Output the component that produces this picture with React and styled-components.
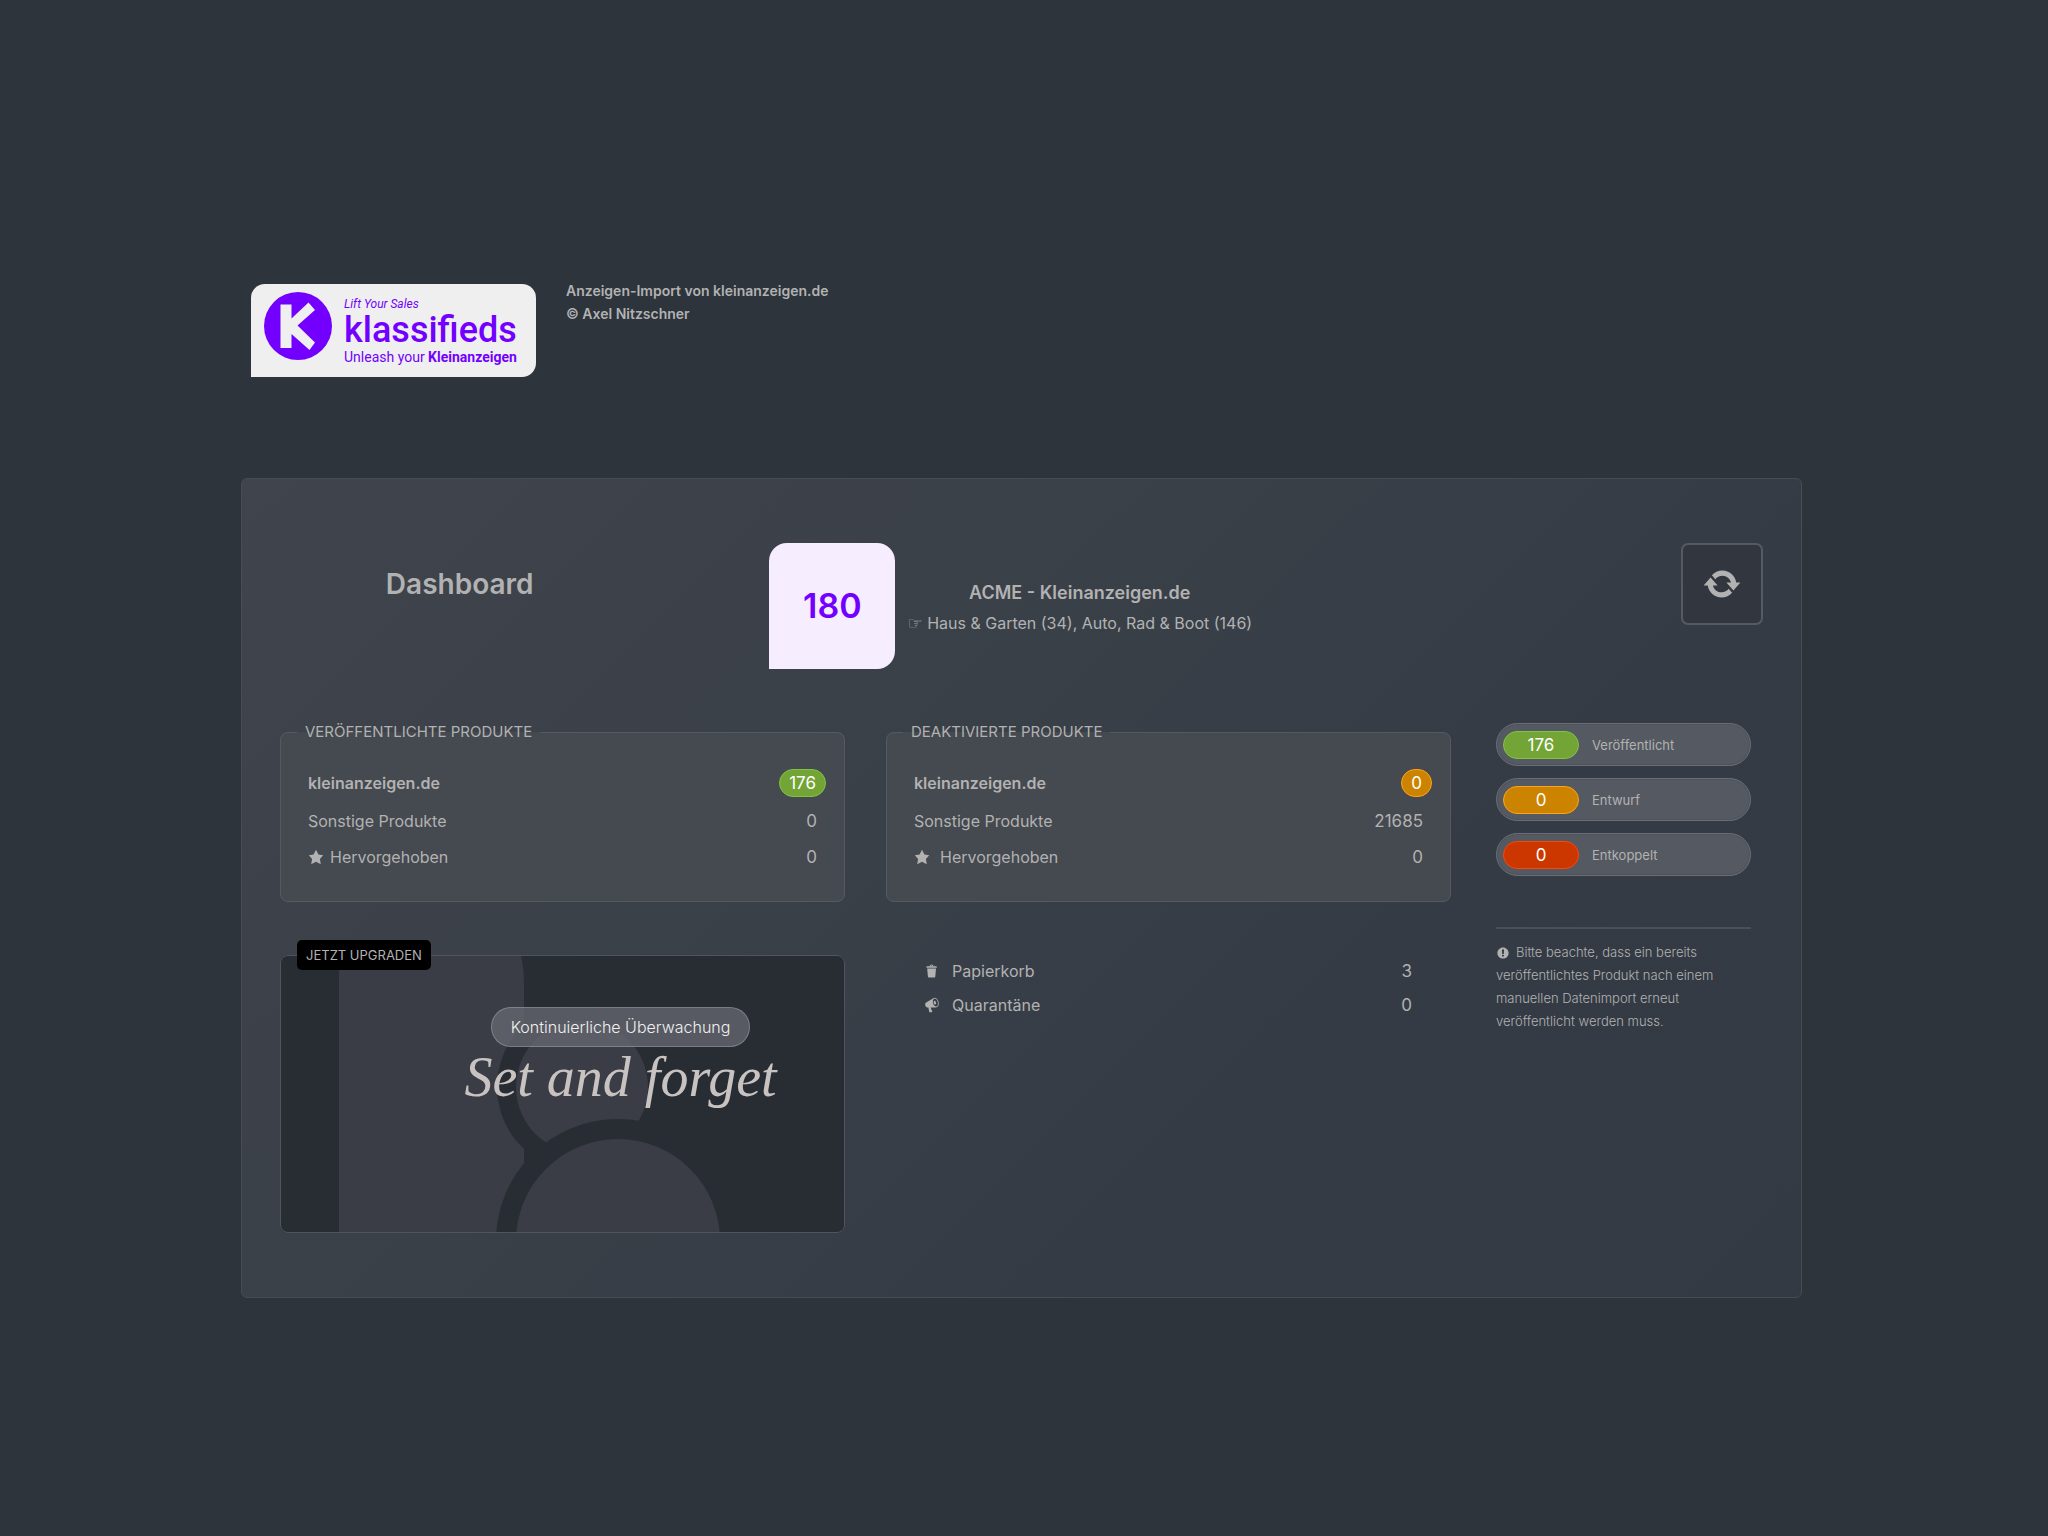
import React from 'react';
import styled, { createGlobalStyle, css } from 'styled-components';

const GlobalStyle = createGlobalStyle`
	* {
		box-sizing: border-box;
	}

	body {
		margin: 0;
		min-height: 100vh;
		background: #2d343b;
		color: #b2b2b2;
		font-family: Inter, 'Liberation Sans', sans-serif;
		font-size: 16px;
		line-height: 24px;
	}
`;

const badgeColors = {
	green: { background: '#72a536', border: '#80c342' },
	orange: { background: '#cc8400', border: '#ffa314' },
	red: { background: '#cc3700', border: '#ff4508' },
};

const Page = styled.div`
	padding: 279px 246px 64px 241px;
`;

const Brand = styled.header`
	display: flex;
	gap: 30px;
	padding-left: 10px;
	margin-bottom: 101px;
`;

const Logo = styled.div`
	display: flex;
	gap: 12px;
	width: 285px;
	height: 93px;
	margin-top: 5px;
	padding: 8px 13px;
	background: #efefef;
	color: #7300ff;
	border-radius: 14px 14px 14px 0;
	font-family: Roboto, sans-serif;

	& svg {
		flex: none;
		width: 68px;
		height: 68px;
	}
`;

const LogoText = styled.div`
	display: flex;
	flex-direction: column;
	padding-top: 5px;
	white-space: nowrap;
`;

const Slogan = styled.em`
	font-size: 12px;
	line-height: 14px;
`;

const Wordmark = styled.span`
	font-size: 36px;
	font-weight: 500;
	line-height: 38px;
`;

const Claim = styled.span`
	font-size: 14px;
	line-height: 16px;
`;

const Credits = styled.div`
	font-size: 14px;
	font-weight: 600;
	line-height: 23px;
`;

const Panel = styled.main`
	padding: 64px 38px;
	border: 1px solid #474c54;
	border-radius: 6px;
	background: linear-gradient(135deg, #40444c 0%, #3a4048 40%, #353b45 70%, #343a43 100%);
`;

const PanelHead = styled.div`
	display: grid;
	grid-template-columns: 33% 1fr auto;
	align-items: start;
	margin-bottom: 52px;
`;

const Title = styled.h1`
	margin: 0;
	padding-right: 130px;
	font-size: 28px;
	font-weight: 600;
	line-height: 82px;
	text-align: center;
`;

const Account = styled.div`
	display: flex;
	align-items: center;
	gap: 12px;
`;

const Total = styled.div`
	display: flex;
	align-items: center;
	justify-content: center;
	width: 126px;
	height: 126px;
	background: #f6edff;
	color: #7300ff;
	border-radius: 18px 18px 18px 0;
	font-size: 34px;
	font-weight: 600;
`;

const AccountInfo = styled.div`
	padding-top: 3px;
	text-align: center;
	white-space: nowrap;
`;

const AccountName = styled.h2`
	margin: 0;
	font-size: 18px;
	font-weight: 600;
	line-height: 30px;
`;

const Categories = styled.p`
	margin: 0;
	line-height: 30px;
`;

const Pointer = styled.span`
	font-family: 'DejaVu Sans', sans-serif;
	font-size: 17px;
	font-weight: 700;
`;

const RefreshButton = styled.button`
	display: flex;
	align-items: center;
	justify-content: center;
	width: 82px;
	height: 82px;
	padding: 0;
	color: inherit;
	background: #32363f;
	border: 2px solid #565a62;
	border-radius: 7px;
	cursor: pointer;

	& svg {
		width: 40px;
		height: 40px;
	}
`;

const Columns = styled.div`
	display: flex;
	gap: 45px;
	padding-right: 12px;
`;

const Boxes = styled.div`
	flex: 1;
	display: grid;
	grid-template-columns: 1fr 1fr;
	align-items: start;
	gap: 38px 41px;
`;

const Box = styled.fieldset`
	margin: 0;
	min-width: 0;
	height: 181px;
	padding: 20px 18px 0 27px;
	background: #454950;
	border: 1px solid #555a62;
	border-radius: 8px;
`;

const BoxTitle = styled.legend`
	margin-left: -11px;
	padding: 0 8px;
	font-size: 15px;
	line-height: 22px;
	text-transform: uppercase;
`;

const List = styled.dl`
	margin: 0;
`;

const Row = styled.div`
	display: flex;
	align-items: center;
	justify-content: space-between;
	height: ${(p) => p.height || '36px'};
`;

const Label = styled.dt`
	display: flex;
	align-items: center;
	gap: ${(p) => p.gap || '8px'};
	font-weight: ${(p) => (p.strong ? 600 : 400)};

	& svg {
		width: 16px;
		height: 16px;
	}
`;

const Value = styled.dd`
	margin: 0;
	padding-right: ${(p) => (p.flush ? 0 : '9px')};
	font-size: 17px;
`;

const Badge = styled.span`
	display: block;
	min-width: 30px;
	padding: 0 9px;
	border: 1px solid ${(p) => badgeColors[p.color].border};
	border-radius: 14px;
	background: ${(p) => badgeColors[p.color].background};
	color: #fff;
	font-size: 17px;
	line-height: 26px;
	text-align: center;

	${(p) =>
		p.wide &&
		css`
			width: 76px;
		`}
`;

const Promo = styled.fieldset`
	position: relative;
	margin: 0;
	min-width: 0;
	height: 293px;
	padding: 0;
	background: #282d34;
	border: 1px solid #50555d;
	border-radius: 8px;
`;

const PromoTitle = styled.legend`
	position: relative;
	z-index: 1;
	margin-left: 16px;
	padding: 0 9px;
	background: #000;
	border-radius: 5px;
	font-size: 13px;
	line-height: 30px;
	text-transform: uppercase;
`;

/* sits behind the promo text, up to the border line */
const PromoArt = styled.svg`
	position: absolute;
	left: 0;
	bottom: 0;
	width: 100%;
	height: 276px;
	border-radius: 7px;
`;

const PromoBody = styled.div`
	position: relative;
	display: flex;
	flex-direction: column;
	align-items: center;
	padding: 37px 0 0 116px;
`;

const Pill = styled.span`
	padding: 0 19px;
	border: 1px solid rgba(255, 255, 255, 0.22);
	border-radius: 20px;
	background: rgba(103, 106, 114, 0.75);
	color: #f0f0f0;
	font-weight: 300;
	line-height: 38px;
`;

const Script = styled.span`
	color: #c8c3c1;
	font-family: 'Liberation Serif', serif;
	font-size: 56px;
	font-style: italic;
	line-height: 60px;
	white-space: nowrap;
`;

const Stock = styled(List)`
	padding: 14px 39px 0 38px;
`;

const Side = styled.aside`
	width: 255px;
	padding-top: 2px;
`;

const Status = styled.div`
	display: flex;
	align-items: center;
	gap: 13px;
	height: 43px;
	margin-bottom: 12px;
	padding: 0 6px;
	background: #555961;
	border: 1px solid #6a6e77;
	border-radius: 22px;
	box-shadow: inset 0 0 0 1px #4e525a;
	font-size: 13px;
`;

const Note = styled.p`
	margin: 51px 0 0;
	padding-top: 12px;
	border-top: 2px solid #4a4f58;
	font-size: 13px;
	font-weight: 300;
	line-height: 23px;

	& svg {
		width: 14px;
		height: 14px;
		margin-right: 6px;
		vertical-align: -3px;
	}
`;

const icons = {
	star: 'M10 1l3 6 6 .75-4.12 4.62L16 19l-6-3-6 3 1.13-6.63L1 7.75 7 7z',
	trash:
		'M12 4h3c.6 0 1 .4 1 1v1H3V5c0-.6.5-1 1-1h3c.2-1.1 1.3-2 2.5-2s2.3.9 2.5 2zM8 4h3c-.2-.6-.9-1-1.5-1S8.2 3.4 8 4zM4 7h11l-.9 10.1c0 .5-.5.9-1 .9H5.9c-.5 0-.9-.4-1-.9L4 7z',
	update:
		'M10.2 3.28c3.53 0 6.43 2.61 6.92 6h2.08l-3.5 4-3.5-4h2.32c-.45-1.97-2.21-3.45-4.32-3.45-1.45 0-2.73.71-3.54 1.78L4.95 5.66C6.23 4.2 8.11 3.28 10.2 3.28zm-.4 13.44c-3.52 0-6.43-2.61-6.92-6H.8l3.5-4c1.17 1.33 2.33 2.67 3.5 4H5.48c.45 1.97 2.21 3.45 4.32 3.45 1.45 0 2.73-.71 3.54-1.78l1.71 1.95c-1.28 1.46-3.15 2.38-5.25 2.38z',
	warning:
		'M10 2c4.42 0 8 3.58 8 8s-3.58 8-8 8-8-3.58-8-8 3.58-8 8-8zm1.13 9.38l.35-6.46H8.52l.35 6.46h2.26zm-.09 3.36c.24-.23.37-.55.37-.96 0-.42-.12-.74-.36-.97s-.59-.35-1.06-.35-.82.12-1.07.35-.37.55-.37.97c0 .41.13.73.38.96.26.23.61.34 1.06.34s.8-.11 1.05-.34z',
	megaphone:
		'M18.15 5.94c.46 1.62.38 3.22-.02 4.48-.42 1.28-1.26 2.18-2.3 2.48-.16.06-.26.06-.4.06-.06.02-.12.02-.18.02-.06.02-.14.02-.22.02h-6.8l2.22 5.5c.02.14-.06.26-.14.34-.08.1-.24.16-.34.16H6.95c-.1 0-.26-.06-.34-.16-.08-.08-.16-.2-.14-.34l-1-5.5H4.25l-.02-.02c-.5.06-1.08-.18-1.54-.62s-.88-1.08-1.06-1.88c-.24-.8-.2-1.56-.02-2.2.18-.62.58-1.08 1.06-1.3l.02-.02 9-5.4c.1-.06.18-.1.24-.16.06-.04.14-.08.24-.12.16-.08.28-.12.5-.18 1.04-.3 2.24.1 3.22.98s1.84 2.24 2.26 3.86zm-2.58 5.98h-.02c.4-.1.74-.34 1.04-.7.58-.7.86-1.76.86-3.04 0-.64-.1-1.3-.28-1.98-.34-1.36-1.02-2.5-1.78-3.24s-1.68-1.1-2.46-.88c-.82.22-1.4.96-1.7 2-.32 1.04-.28 2.36.06 3.72.38 1.36 1 2.5 1.8 3.24.78.74 1.62 1.1 2.48.88zm-2.54-7.08c.22-.04.42-.02.62.04.38.16.76.48 1.02 1s.42 1.2.42 1.78c0 .3-.04.56-.12.8-.18.48-.44.84-.86.94-.34.1-.8-.06-1.14-.4s-.64-.86-.78-1.5c-.18-.62-.12-1.24.02-1.72s.48-.84.82-.94z',
};

const Icon = ({ name }) => (
	<svg viewBox="0 0 20 20" fill="currentColor" aria-hidden="true">
		<path d={icons[name]} />
	</svg>
);

const ProductBox = ({ title, count, color, others, featured, iconGap }) => (
	<Box>
		<BoxTitle>{title}</BoxTitle>
		<List>
			<Row height="40px">
				<Label strong>kleinanzeigen.de</Label>
				<Value flush>
					<Badge color={color}>{count}</Badge>
				</Value>
			</Row>
			<Row>
				<Label>Sonstige Produkte</Label>
				<Value>{others}</Value>
			</Row>
			<Row>
				<Label gap={iconGap}>
					<Icon name="star" />
					Hervorgehoben
				</Label>
				<Value>{featured}</Value>
			</Row>
		</List>
	</Box>
);

const statuses = [
	{ label: 'Veröffentlicht', count: 176, color: 'green' },
	{ label: 'Entwurf', count: 0, color: 'orange' },
	{ label: 'Entkoppelt', count: 0, color: 'red' },
];

const App = () => (
	<Page>
		<GlobalStyle />

		<Brand>
			<Logo>
				<svg viewBox="0 0 68 68" aria-hidden="true">
					<circle cx="34" cy="34" r="34" fill="#7300ff" />
					<path
						d="M16.500 12.500h11v14L44.500 10.500l6.500 7.500-17.500 15.500L51 50.500l-5.500 7.500-18-16v14h-11z"
						fill="#efefef"
					/>
				</svg>
				<LogoText>
					<Slogan>Lift Your Sales</Slogan>
					<Wordmark>klassifieds</Wordmark>
					<Claim>
						Unleash your <b>Kleinanzeigen</b>
					</Claim>
				</LogoText>
			</Logo>
			<Credits>
				Anzeigen-Import von kleinanzeigen.de
				<br />© Axel Nitzschner
			</Credits>
		</Brand>

		<Panel>
			<PanelHead>
				<Title>Dashboard</Title>
				<Account>
					<Total>180</Total>
					<AccountInfo>
						<AccountName>ACME - Kleinanzeigen.de</AccountName>
						<Categories>
							<Pointer>☞</Pointer> Haus &amp; Garten (34), Auto, Rad &amp; Boot (146)
						</Categories>
					</AccountInfo>
				</Account>
				<RefreshButton type="button" aria-label="Aktualisieren">
					<Icon name="update" />
				</RefreshButton>
			</PanelHead>

			<Columns>
				<Boxes>
					<ProductBox
						title="Veröffentlichte Produkte"
						count={176}
						color="green"
						others={0}
						featured={0}
						iconGap="6px"
					/>
					<ProductBox
						title="Deaktivierte Produkte"
						count={0}
						color="orange"
						others={21685}
						featured={0}
						iconGap="10px"
					/>

					<Promo>
						<PromoTitle>Jetzt upgraden</PromoTitle>
						<PromoArt viewBox="0 0 563 276" preserveAspectRatio="xMinYMax slice" aria-hidden="true">
							<path d="M58 0H240Q243 12 243 30V276H58z" fill="#3a3d45" />
							<circle cx="301" cy="131" r="85" fill="#282d34" />
							<circle cx="301" cy="131" r="66" fill="#3a3d45" />
							<circle cx="337" cy="285" r="122" fill="#282d34" />
							<circle cx="337" cy="285" r="102" fill="#3a3d45" />
						</PromoArt>
						<PromoBody>
							<Pill>Kontinuierliche Überwachung</Pill>
							<Script>Set and forget</Script>
						</PromoBody>
					</Promo>

					<Stock>
						<Row height="34px">
							<Label gap="12px">
								<Icon name="trash" />
								Papierkorb
							</Label>
							<Value flush>3</Value>
						</Row>
						<Row height="34px">
							<Label gap="12px">
								<Icon name="megaphone" />
								Quarantäne
							</Label>
							<Value flush>0</Value>
						</Row>
					</Stock>
				</Boxes>

				<Side>
					{statuses.map((s) => (
						<Status key={s.label}>
							<Badge wide color={s.color}>
								{s.count}
							</Badge>
							{s.label}
						</Status>
					))}
					<Note>
						<Icon name="warning" />
						Bitte beachte, dass ein bereits veröffentlichtes Produkt nach einem manuellen Datenimport
						erneut veröffentlicht werden muss.
					</Note>
				</Side>
			</Columns>
		</Panel>
	</Page>
);

export default App;
